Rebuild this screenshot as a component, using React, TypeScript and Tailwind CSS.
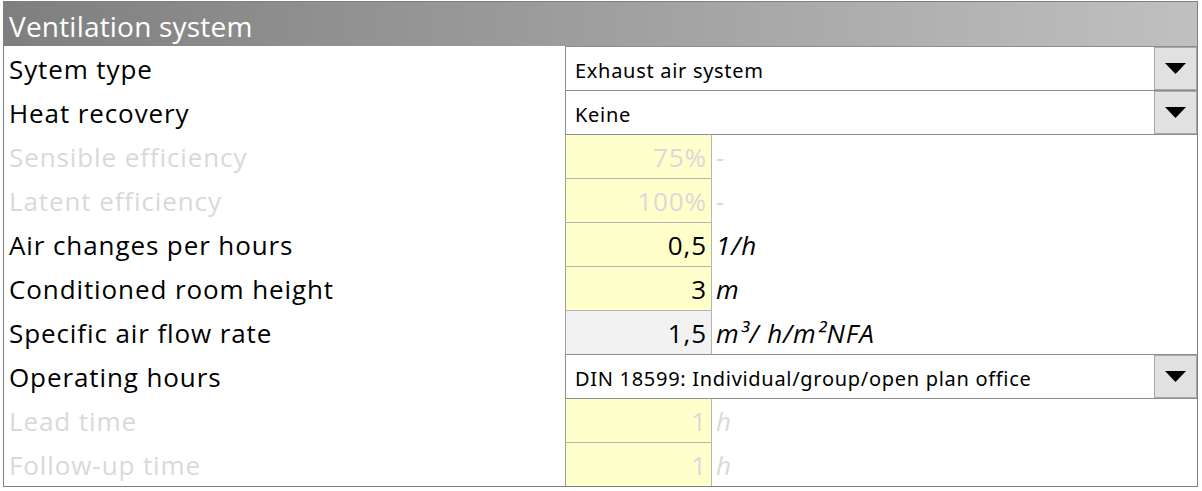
import React from 'react';

type Row =
  | { kind: 'select'; label: string; value: string }
  | { kind: 'value'; label: string; value: string; unit: string; disabled?: boolean; gray?: boolean; topLine?: boolean };

const rows: Row[] = [
  { kind: 'select', label: 'Sytem type', value: 'Exhaust air system' },
  { kind: 'select', label: 'Heat recovery', value: 'Keine' },
  { kind: 'value', label: 'Sensible efficiency', value: '75%', unit: '-', disabled: true, topLine: true },
  { kind: 'value', label: 'Latent efficiency', value: '100%', unit: '-', disabled: true },
  { kind: 'value', label: 'Air changes per hours', value: '0,5', unit: '1/h' },
  { kind: 'value', label: 'Conditioned room height', value: '3', unit: 'm' },
  { kind: 'value', label: 'Specific air flow rate', value: '1,5', unit: 'm³/ h/m²NFA', gray: true },
  { kind: 'select', label: 'Operating hours', value: 'DIN 18599: Individual/group/open plan office' },
  { kind: 'value', label: 'Lead time', value: '1', unit: 'h', disabled: true, topLine: true },
  { kind: 'value', label: 'Follow-up time', value: '1', unit: 'h', disabled: true },
];

const cellFont = "font-['Open_Sans',sans-serif] text-[26px] tracking-[0.9px]";

function Arrow() {
  return (
    <svg width="21" height="11" viewBox="0 0 21 11">
      <polygon points="0,0 21,0 10.5,11" fill="#000" />
    </svg>
  );
}

export default function App() {
  return (
    <div className="min-h-[491px] w-[1202px] bg-white pt-[1px]">
      <div className="ml-[3px] w-[1195px] border border-[#7f7f7f]">
        <div className="flex h-[44px] items-end bg-gradient-to-r from-[#7f7f7f] to-[#c0c0c0] pb-[6px] pl-[5px]">
          <span className="font-['Open_Sans',sans-serif] text-[28px] tracking-[0.2px] leading-none text-white">Ventilation system</span>
        </div>
        {rows.map((row, i) => (
          <div key={i} className="flex h-[44px]">
            <div
              className={`flex w-[561px] items-end pb-[8px] pl-[5px] leading-none ${cellFont} ${
                row.kind === 'value' && row.disabled ? 'text-[#d9d9d9]' : 'text-black'
              }`}
            >
              {row.label}
            </div>
            {row.kind === 'select' ? (
              <div className="flex flex-1 border-l border-t border-l-[#8e8e8e] border-t-[#8e8e8e]">
                <div className="flex flex-1 items-end pb-[9px] pl-[9px] font-['Noto_Sans',sans-serif] text-[20px] tracking-[0.7px] leading-none text-black">
                  {row.value}
                </div>
                <div className="flex w-[43px] items-center justify-center border border-[#a8a8a8] bg-[#e1e1e1]">
                  <Arrow />
                </div>
              </div>
            ) : (
              <>
                <div
                  className={`flex w-[147px] items-end justify-end border-l border-r border-t pb-[8px] pr-[4px] leading-none ${cellFont} ${
                    row.topLine ? 'border-t-[#8e8e8e]' : 'border-t-[#b4b4b4]'
                  } border-l-[#a0a0a0] border-r-[#b4b4b4] ${row.gray ? 'bg-[#f2f2f2]' : 'bg-[#ffffcc]'} ${
                    row.disabled ? 'text-[#d9d9d9]' : 'text-black'
                  }`}
                >
                  {row.value}
                </div>
                <div
                  className={`flex flex-1 items-end pb-[8px] pl-[4px] italic leading-none ${cellFont} ${
                    row.topLine ? 'border-t border-t-[#8e8e8e]' : ''
                  } ${row.disabled ? 'text-[#d9d9d9]' : 'text-black'}`}
                >
                  {row.unit}
                </div>
              </>
            )}
          </div>
        ))}
      </div>
    </div>
  );
}
